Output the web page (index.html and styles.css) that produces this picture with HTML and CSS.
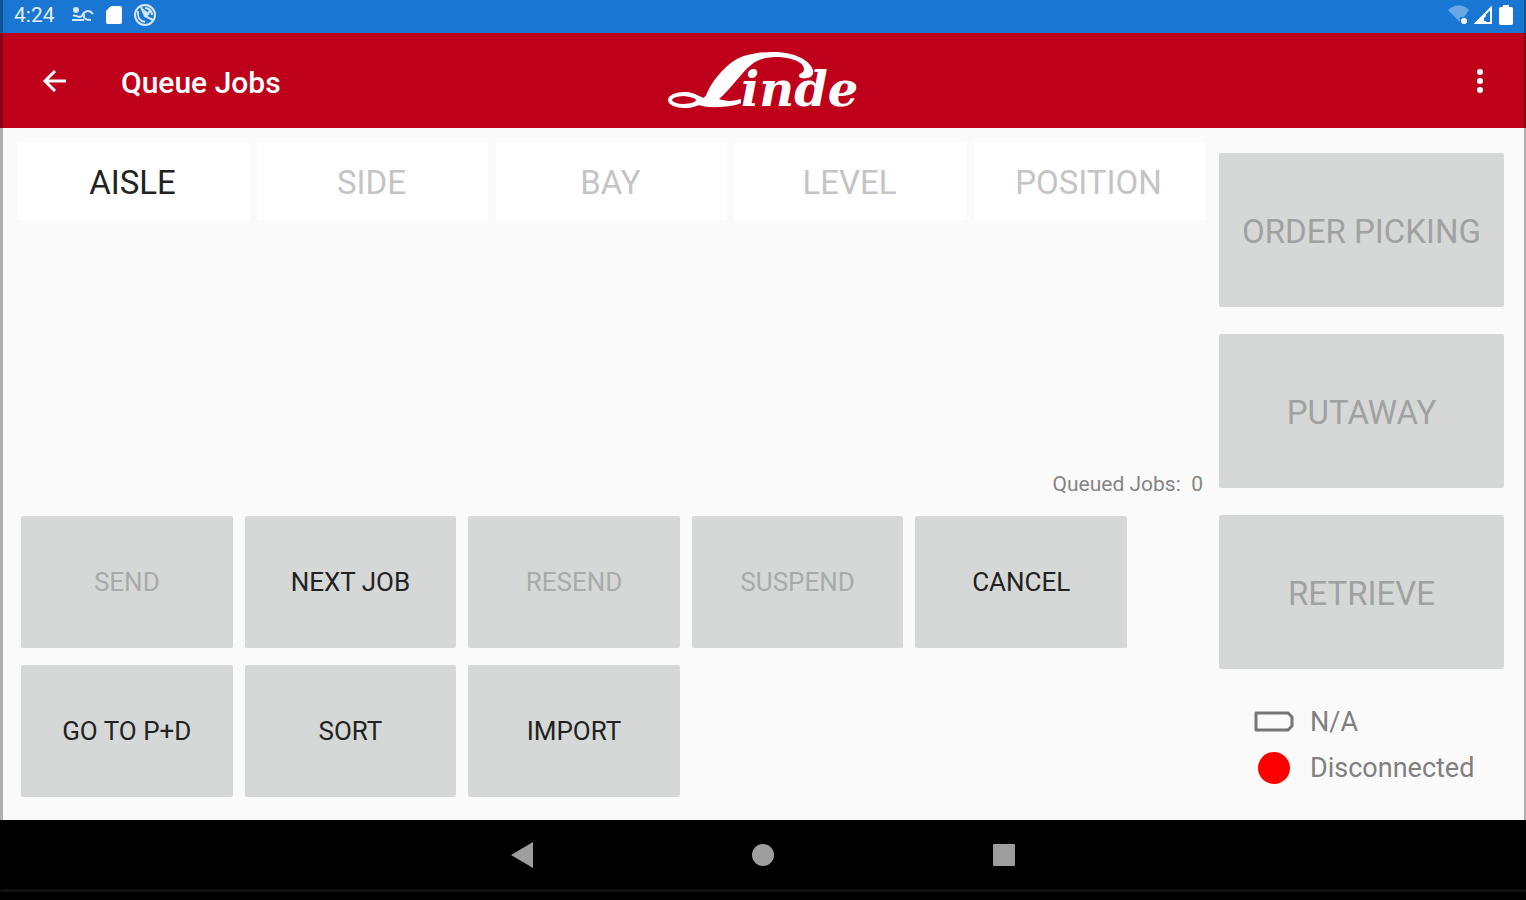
FILE: index.html
```html
<!DOCTYPE html>
<html lang="en">
    <head>
        <meta charset="UTF-8">
        <meta name="viewport" content="width=device-width, initial-scale=1">
        <title>Queue Jobs</title>
        <link rel="stylesheet" href="styles.css">
    </head>
    <body>
        <div class="status-bar">
            <span class="clock">4:24</span>
            <svg class="status-icon" width="24" height="24" viewBox="0 0 24 24" fill="none" stroke="#d5e6f7" stroke-width="2">
                <circle cx="5" cy="7" r="3" fill="#d5e6f7" stroke="none"/>
                <path d="M1 17h12M2 13c3-2 5 3 9 0 2-5 7-7 11-2M13 11c-1 5 2 6 7 6"/>
            </svg>
            <svg class="status-icon" width="18" height="20" viewBox="0 0 18 20">
                <path d="M6 1h9a2 2 0 0 1 2 2v14a2 2 0 0 1-2 2H3a2 2 0 0 1-2-2V6z" fill="#fff"/>
            </svg>
            <svg class="status-icon" width="24" height="24" viewBox="0 0 24 24" fill="none" stroke="#d5e6f7" stroke-width="2">
                <circle cx="12" cy="12" r="10"/>
                <path d="M8 4l4 9 8 4M12 13l6-6M5 8c-1 6 2 10 7 11M12 5c4 0 7 3 7 7"/>
                <path d="M9 5l8 6-4 3z" fill="#d5e6f7" stroke="none"/>
            </svg>
            <div class="status-right">
                <svg width="22" height="20" viewBox="0 0 22 20">
                    <path d="M0 5C6-1 16-1 21 5l-5 7h-4v5z" fill="#69a8e4"/>
                    <circle cx="16" cy="16" r="3" fill="#fff"/>
                </svg>
                <svg width="20" height="20" viewBox="0 0 20 20">
                    <path d="M2 18L17 3v15z" fill="none" stroke="#fff" stroke-width="2"/>
                    <path d="M1 19l11-11v11z" fill="#fff"/>
                    <path d="M10 13l3-3v6h-3z" fill="#1976d2"/>
                </svg>
                <svg width="16" height="22" viewBox="0 0 16 22">
                    <path d="M5 1h6v2h2a2 2 0 0 1 2 2v14a2 2 0 0 1-2 2H3a2 2 0 0 1-2-2V5a2 2 0 0 1 2-2h2z" fill="#fff"/>
                </svg>
            </div>
        </div>

        <header class="app-bar">
            <div class="app-bar-left">
                <button class="icon-button" aria-label="Back">
                    <svg width="26" height="26" viewBox="0 0 26 26" fill="none" stroke="#fff" stroke-width="3">
                        <path d="M24 13H3M13 3L3 13l10 10"/>
                    </svg>
                </button>
                <h1 class="title">Queue Jobs</h1>
            </div>
            <svg class="logo" width="200" height="80" viewBox="0 -8 200 80" role="img" aria-label="Linde">
                <text class="logo-text" y="57"><tspan class="logo-initial" x="44">L</tspan><tspan x="78">inde</tspan></text>
                <!-- flourish around the initial -->
                <path d="M36 56C42 51 43 45 47 38 52 29 64 15 74 10 84 5 98 3 110 3c20 0 36 7 40 18 1 5-2 8-6 8-5 1-9 0-8-3 1-2 5-2 5-6 0-7-12-11-25-12-12 0-21 2-28 8C78 24 68 40 56 50c6 2 12 3 22 0v4c-8 4-32 6-42 2z" fill="#fff"/>
                <ellipse cx="21" cy="51" rx="14" ry="6" fill="none" stroke="#fff" stroke-width="4"/>
                <path d="M20 45c12 0 16 5 30 10M20 57c12 0 18-3 26-10" fill="none" stroke="#fff" stroke-width="4"/>
            </svg>
            <div class="app-bar-right">
                <button class="icon-button" aria-label="More options">
                    <svg width="8" height="26" viewBox="0 0 8 26" fill="#fff">
                        <circle cx="4" cy="4" r="3"/>
                        <circle cx="4" cy="13" r="3"/>
                        <circle cx="4" cy="22" r="3"/>
                    </svg>
                </button>
            </div>
        </header>

        <main class="content">
            <section class="jobs">
                <div class="fields">
                    <button class="field">AISLE</button>
                    <button class="field" disabled>SIDE</button>
                    <button class="field" disabled>BAY</button>
                    <button class="field" disabled>LEVEL</button>
                    <button class="field" disabled>POSITION</button>
                </div>
                <div class="queue-count">Queued Jobs:&nbsp; 0</div>
                <div class="actions">
                    <button class="action" disabled>SEND</button>
                    <button class="action">NEXT JOB</button>
                    <button class="action" disabled>RESEND</button>
                    <button class="action" disabled>SUSPEND</button>
                    <button class="action">CANCEL</button>
                    <button class="action">GO TO P+D</button>
                    <button class="action">SORT</button>
                    <button class="action">IMPORT</button>
                </div>
            </section>

            <aside class="modes">
                <button class="mode" disabled>ORDER PICKING</button>
                <button class="mode" disabled>PUTAWAY</button>
                <button class="mode" disabled>RETRIEVE</button>
                <div class="device">
                    <div class="device-row">
                        <svg width="40" height="22" viewBox="0 0 40 22">
                            <path d="M2 2h32l4 4v9l-4 4H2z" fill="none" stroke="#757575" stroke-width="3" stroke-linejoin="round"/>
                        </svg>
                        <span>N/A</span>
                    </div>
                    <div class="device-row">
                        <svg width="40" height="32" viewBox="0 0 40 32">
                            <circle cx="20" cy="16" r="16" fill="#f00"/>
                        </svg>
                        <span>Disconnected</span>
                    </div>
                </div>
            </aside>
        </main>

        <nav class="nav-bar">
            <button class="icon-button" aria-label="Back">
                <svg width="24" height="28" viewBox="0 0 24 28"><path d="M23 1v26L1 14z" fill="#9e9e9e"/></svg>
            </button>
            <button class="icon-button" aria-label="Home">
                <svg width="24" height="24" viewBox="0 0 24 24"><circle cx="12" cy="12" r="11" fill="#9e9e9e"/></svg>
            </button>
            <button class="icon-button" aria-label="Recent apps">
                <svg width="24" height="24" viewBox="0 0 24 24"><rect x="1" y="1" width="22" height="22" rx="1" fill="#9e9e9e"/></svg>
            </button>
        </nav>
    </body>
</html>
```
FILE: styles.css
```css
:root {
    --blue: #1976d2;
    --red: #be001a;
    --page: #fafafa;
    --button: #d6d8d7;
}

* {
    box-sizing: border-box;
}

body {
    margin: 0;
    min-height: 100vh;
    display: flex;
    flex-direction: column;
    position: relative;
    background-color: var(--page);
    font-family: Roboto, "Liberation Sans", sans-serif;
}

/* Thin shade down both edges of the screen */
body::after {
    content: "";
    position: absolute;
    inset: 0;
    border-left: 3px solid rgba(0, 0, 0, 0.3);
    border-right: 2px solid rgba(0, 0, 0, 0.3);
    pointer-events: none;
}

button {
    border: 0;
    padding: 0;
    font-family: inherit;
    color: #222;
}

svg {
    display: block;
}

.icon-button {
    background: none;
}

/* Status bar */

.status-bar {
    display: flex;
    align-items: center;
    height: 33px;
    padding: 0 12px 4px 14px;
    background-color: var(--blue);
    color: #e3effa;
}

.clock {
    margin-right: 16px;
    font-size: 21px;
    line-height: 26px;
}

.status-icon {
    margin-right: 10px;
}

.status-right {
    display: flex;
    align-items: center;
    gap: 4px;
    margin-left: auto;
}

/* App bar */

.app-bar {
    display: grid;
    grid-template-columns: 1fr auto 1fr;
    align-items: center;
    height: 95px;
    padding: 0 42px;
    background-color: var(--red);
    color: #fff;
}

.app-bar-left {
    display: flex;
    align-items: center;
    gap: 53px;
}

.app-bar-right {
    display: flex;
    justify-content: flex-end;
}

.title {
    margin: 0;
    padding-top: 4px;
    font-size: 30px;
    line-height: 36px;
    font-weight: 500;
}

.logo-text {
    font-family: "DejaVu Serif", serif;
    font-size: 48px;
    font-weight: bold;
    font-style: italic;
    fill: #fff;
}

.logo-initial {
    font-family: "Liberation Serif", serif;
    font-size: 24px;
}

/* Content */

.content {
    flex: 1;
    display: grid;
    grid-template-columns: 1fr 285px;
    gap: 14px;
    padding: 14px 22px 23px 18px;
}

.jobs {
    display: flex;
    flex-direction: column;
}

.fields {
    display: grid;
    grid-template-columns: repeat(5, 1fr);
    gap: 8px;
}

.field {
    height: 78px;
    padding: 4px 2px 0 0;
    background-color: #fff;
    font-size: 33px;
    line-height: 40px;
}

.field:disabled {
    color: #c4c4c4;
}

.queue-count {
    margin-top: auto;
    padding-right: 2px;
    text-align: right;
    font-size: 21px;
    line-height: 26px;
    color: #858585;
}

.actions {
    display: grid;
    grid-template-columns: repeat(5, 1fr);
    gap: 17px 12px;
    padding: 19px 78px 0 3px;
}

.action {
    height: 132px;
    border-radius: 2px;
    background-color: var(--button);
    font-size: 26px;
    line-height: 32px;
}

.action:disabled {
    color: #a9abaa;
}

/* Right column */

.modes {
    display: flex;
    flex-direction: column;
    gap: 27px;
    padding-top: 11px;
}

.mode {
    height: 154px;
    padding-top: 4px;
    border-radius: 2px;
    background-color: var(--button);
    font-size: 33px;
    line-height: 40px;
}

.mode:disabled {
    color: #a0a2a1;
}

.device {
    display: flex;
    flex-direction: column;
    gap: 14px;
    padding: 10px 0 0 35px;
    font-size: 27px;
    line-height: 32px;
    color: #808080;
}

.device-row {
    display: flex;
    align-items: center;
    gap: 16px;
}

/* Navigation bar */

.nav-bar {
    display: flex;
    align-items: center;
    justify-content: center;
    gap: 217px;
    height: 80px;
    padding-bottom: 11px;
    background: linear-gradient(#000 69px, #111 69px, #111 72px, #000 72px);
}
```
